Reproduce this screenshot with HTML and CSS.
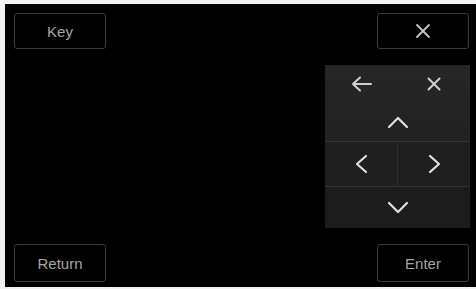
FILE: index.html
```html
<!DOCTYPE html>
<html>
<head>
<meta charset="utf-8">
<link rel="stylesheet" href="styles.css">
</head>
<body>
<div class="frame">
  <div class="screen">
    <div class="row top">
      <div class="btn">Key</div>
      <div class="btn">
        <svg width="16" height="16" viewBox="0 0 16 16"><path d="M2 2 L14 14 M14 2 L2 14" stroke="#c8c8c8" stroke-width="1.8" fill="none" stroke-linecap="round"/></svg>
      </div>
    </div>
    <div class="mid">
      <div class="pad">
        <div class="cell r1">
          <svg width="22" height="16" viewBox="0 0 22 16"><path d="M2 8 H20 M9 1.5 L2 8 L9 14.5" stroke="#d0d0d0" stroke-width="2" fill="none" stroke-linecap="round" stroke-linejoin="round"/></svg>
        </div>
        <div class="cell r1">
          <svg width="16" height="16" viewBox="0 0 16 16"><path d="M2.5 2.5 L13.5 13.5 M13.5 2.5 L2.5 13.5" stroke="#d0d0d0" stroke-width="2" fill="none" stroke-linecap="round"/></svg>
        </div>
        <div class="cell wide r2">
          <svg width="22" height="13" viewBox="0 0 22 13"><path d="M2 11 L11 2 L20 11" stroke="#e0e0e0" stroke-width="2.2" fill="none" stroke-linecap="round" stroke-linejoin="round"/></svg>
        </div>
        <div class="cell r3 lft">
          <svg width="13" height="20" viewBox="0 0 13 20"><path d="M11 2 L2 10 L11 18" stroke="#e0e0e0" stroke-width="2.2" fill="none" stroke-linecap="round" stroke-linejoin="round"/></svg>
        </div>
        <div class="cell r3">
          <svg width="13" height="20" viewBox="0 0 13 20"><path d="M2 2 L11 10 L2 18" stroke="#e0e0e0" stroke-width="2.2" fill="none" stroke-linecap="round" stroke-linejoin="round"/></svg>
        </div>
        <div class="cell wide r4">
          <svg width="22" height="13" viewBox="0 0 22 13"><path d="M2 2 L11 11 L20 2" stroke="#e0e0e0" stroke-width="2.2" fill="none" stroke-linecap="round" stroke-linejoin="round"/></svg>
        </div>
      </div>
    </div>
    <div class="row bottom">
      <div class="btn">Return</div>
      <div class="btn">Enter</div>
    </div>
  </div>
</div>
</body>
</html>
```
FILE: styles.css
```css
html, body {
  margin: 0;
  padding: 0;
  background: #f2f2f2;
}
.frame {
  width: 476px;
  height: 289px;
  padding: 4px 0 2px 5px;
  box-sizing: border-box;
}
.screen {
  width: 471px;
  height: 283px;
  background: #000;
  display: flex;
  flex-direction: column;
  padding: 9px 7px 5px 9px;
  box-sizing: border-box;
  font-family: "Liberation Sans", Arial, sans-serif;
}
.row {
  display: flex;
  justify-content: space-between;
}
.top .btn { height: 36px; }
.bottom .btn { height: 38px; }
.btn {
  width: 92px;
  box-sizing: border-box;
  border: 1px solid #3a3a3a;
  border-radius: 3px;
  display: flex;
  align-items: center;
  justify-content: center;
  color: #a6a6a6;
  font-size: 15px;
}
.mid {
  flex: 1;
  display: flex;
  justify-content: flex-end;
  padding: 16px 0 16px;
}
.pad {
  width: 145px;
  height: 163px;
  margin-right: -1px;
  display: grid;
  grid-template-columns: 73px 72px;
  grid-template-rows: 38px 39px 45px 41px;
  background: linear-gradient(#262626, #1d1d1d);
}
.cell {
  display: flex;
  align-items: center;
  justify-content: center;
  box-sizing: border-box;
}
.wide { grid-column: 1 / 3; }
.r2 { border-bottom: 1px solid #343434; }
.r3 { border-bottom: 1px solid #343434; background: #1f1f1f; }
.lft { border-right: 1px solid #303030; }
.r4 { background: #1c1c1c; }
```
